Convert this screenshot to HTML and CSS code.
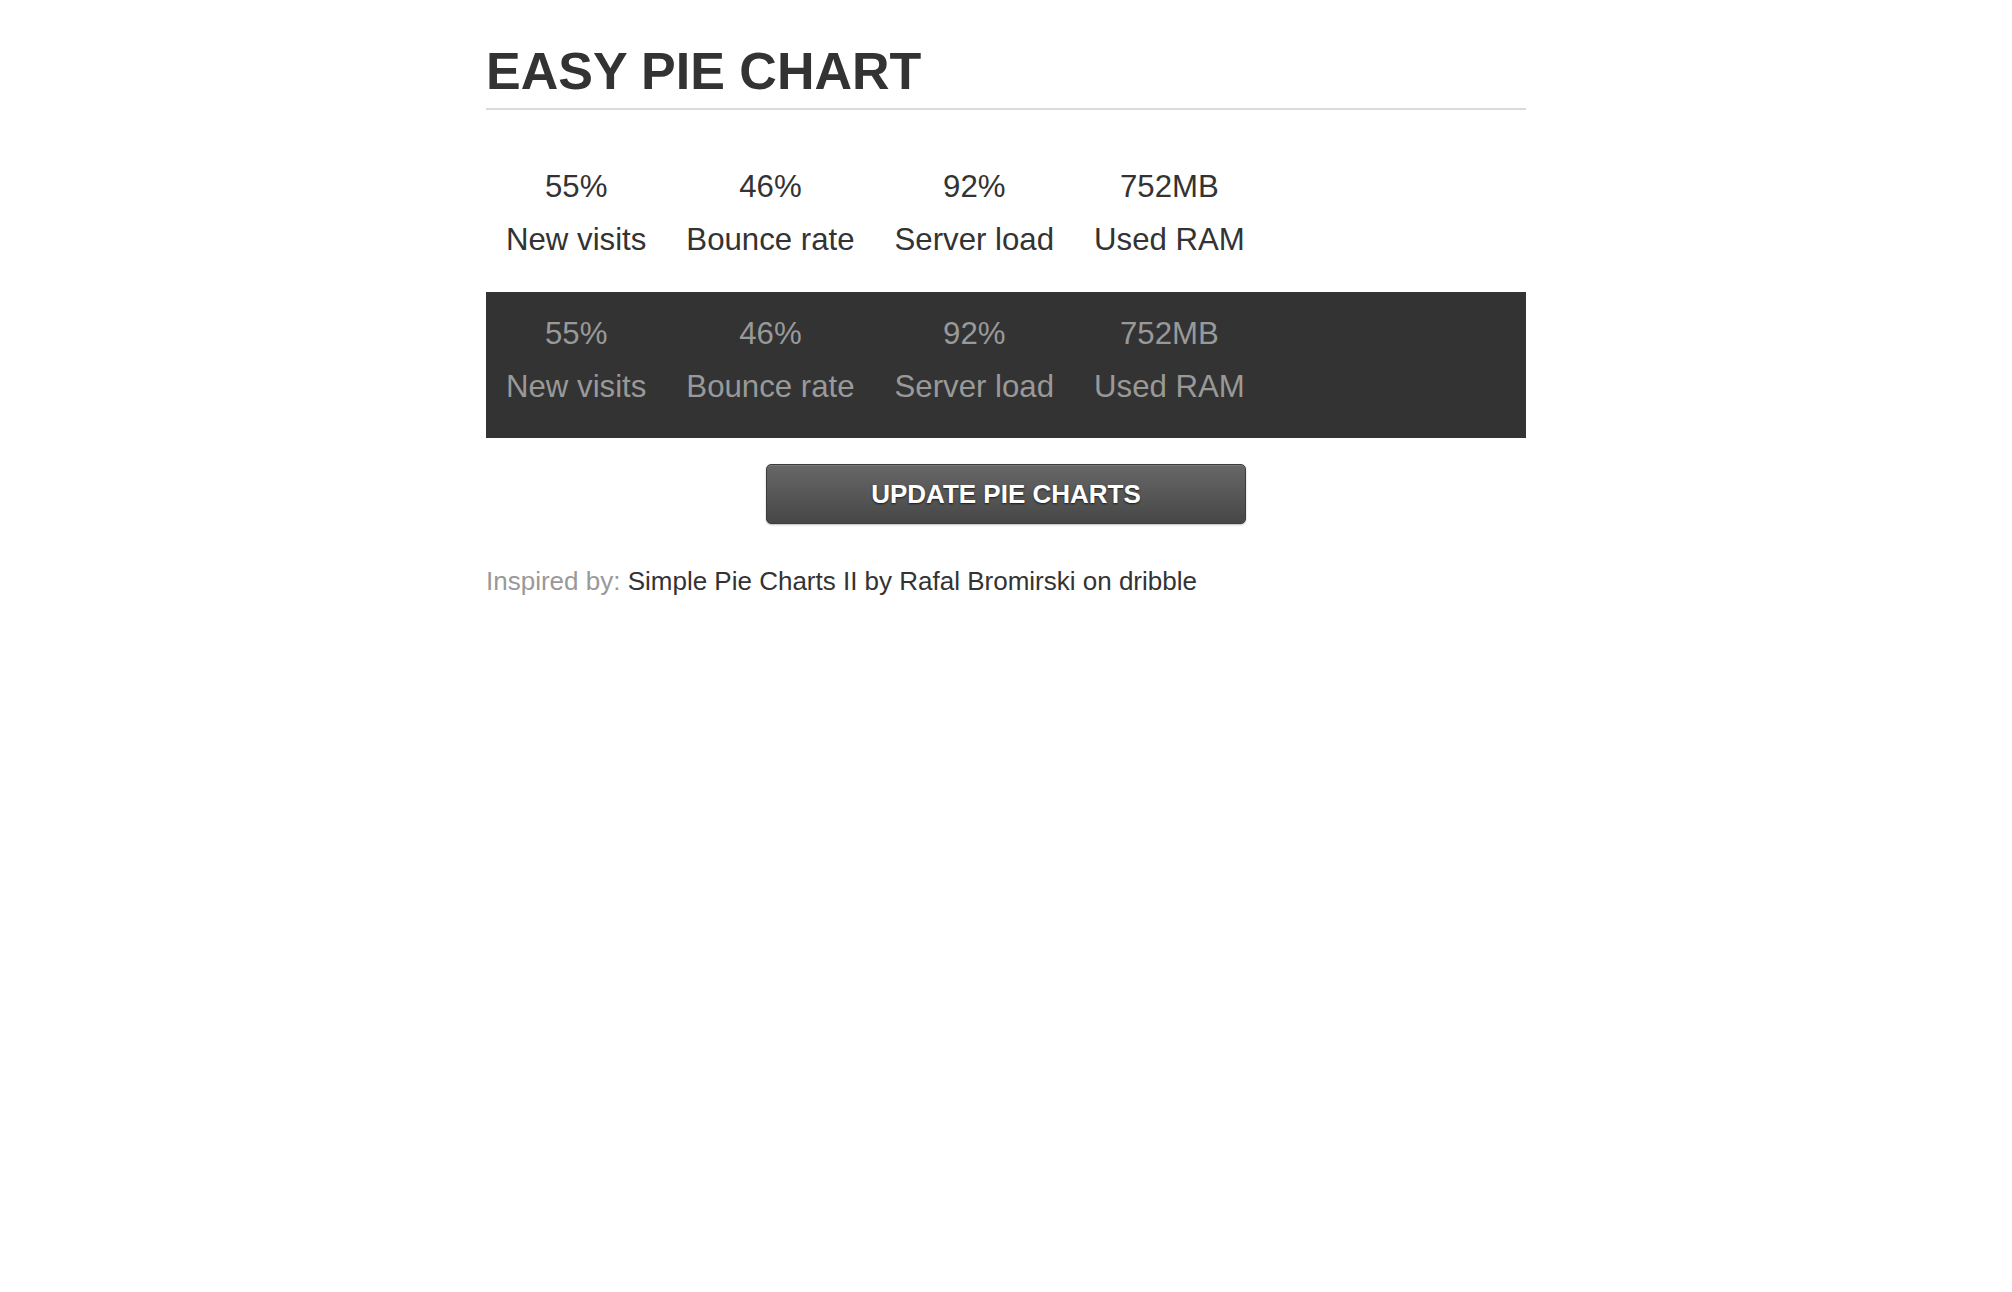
FILE: index.html
```html
<!DOCTYPE html>
<html lang="en">
<head>
<meta charset="utf-8">
<title>Easy Pie Chart</title>
<link rel="stylesheet" href="styles.css">
</head>
<body>
<div class="container">
  <h1 class="title">Easy pie chart</h1>

  <div class="charts light">
    <div class="chart"><div class="percentage">55%</div><div class="label">New visits</div></div>
    <div class="chart"><div class="percentage">46%</div><div class="label">Bounce rate</div></div>
    <div class="chart"><div class="percentage">92%</div><div class="label">Server load</div></div>
    <div class="chart"><div class="percentage">752MB</div><div class="label">Used RAM</div></div>
  </div>

  <div class="charts dark">
    <div class="chart"><div class="percentage">55%</div><div class="label">New visits</div></div>
    <div class="chart"><div class="percentage">46%</div><div class="label">Bounce rate</div></div>
    <div class="chart"><div class="percentage">92%</div><div class="label">Server load</div></div>
    <div class="chart"><div class="percentage">752MB</div><div class="label">Used RAM</div></div>
  </div>

  <div class="actions">
    <button class="update-btn" type="button">Update pie charts</button>
  </div>

  <div class="credits">Inspired by: <a class="credits-link" href="#">Simple Pie Charts II by Rafal Bromirski on dribble</a></div>
</div>
</body>
</html>
```

FILE: styles.css
```css
html, body {
  margin: 0;
  padding: 0;
  background: #fff;
}

body {
  font-family: "Liberation Sans", Arial, Helvetica, sans-serif;
  color: #333;
}

.container {
  width: 1040px;
  margin: 0 auto;
}

.title {
  margin: 41px 0 0;
  padding-bottom: 7px;
  font-size: 52px;
  line-height: 60px;
  font-weight: bold;
  text-transform: uppercase;
  color: #333;
  border-bottom: 2px solid #dadada;
}

.charts {
  display: flex;
  gap: 40px;
  padding: 15px 20px 25px;
}

.charts.light {
  margin-top: 34px;
  padding-top: 16px;
  padding-bottom: 26px;
}

.charts.dark {
  background: #333;
  color: #999;
}

.chart {
  text-align: center;
  font-size: 31.2px;
}

.percentage,
.label {
  height: 53px;
  line-height: 53px;
  white-space: nowrap;
}

.actions {
  display: flex;
  justify-content: center;
  margin-top: 26px;
}

.update-btn {
  width: 480px;
  height: 60px;
  padding: 0;
  border: 1px solid #3c3c3c;
  border-radius: 5px;
  background: linear-gradient(#676767, #474747);
  box-shadow: 0 1px 2px rgba(0, 0, 0, 0.25), inset 0 1px 0 rgba(255, 255, 255, 0.12);
  font-family: "Liberation Sans", Arial, Helvetica, sans-serif;
  font-size: 26px;
  font-weight: bold;
  text-transform: uppercase;
  color: #fff;
  text-shadow: 0 1px 2px rgba(0, 0, 0, 0.7);
  cursor: pointer;
}

.credits {
  margin-top: 42px;
  font-size: 26px;
  line-height: 30px;
  color: #999;
}

.credits-link {
  color: #333;
  text-decoration: none;
}
```
